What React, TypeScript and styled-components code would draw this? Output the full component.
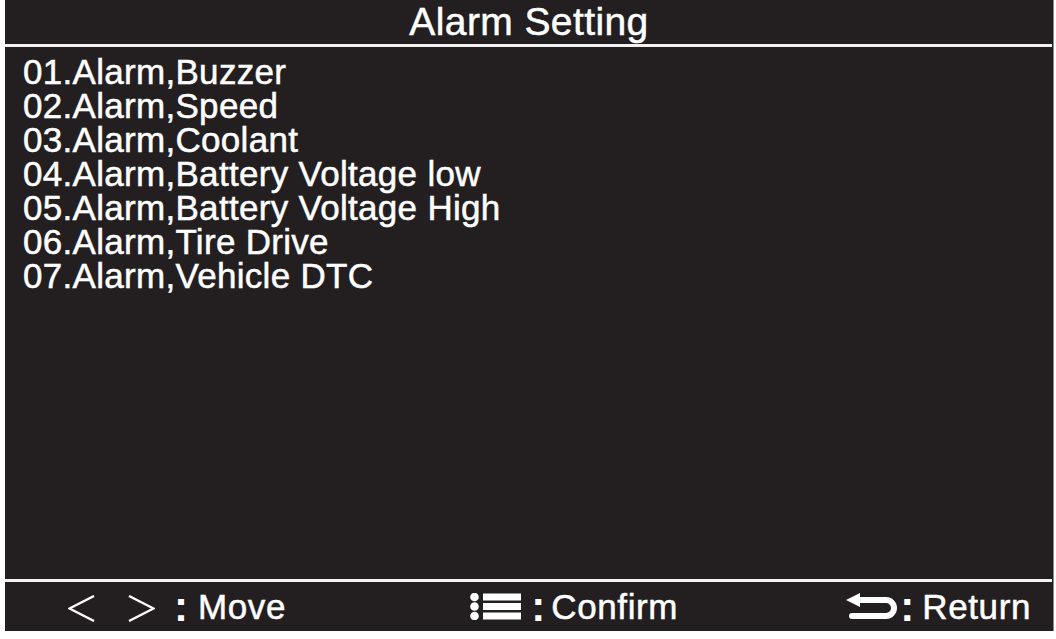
import React from 'react';
import styled, { createGlobalStyle } from 'styled-components';

const GlobalStyle = createGlobalStyle`
    html, body {
        margin: 0;
        padding: 0;
        background: #ffffff;
    }
    body {
        font-family: "Liberation Sans", Arial, sans-serif;
    }
`;

const Screen = styled.div`
    display: flex;
    flex-direction: column;
    width: 1049px;
    height: 631px;
    margin-left: 5px;
    background: #231f20;
    color: #ffffff;
    border-right: 1px solid #8c8a8a;
    box-sizing: border-box;
`;

const Header = styled.h1`
    margin: 0;
    height: 44px;
    line-height: 44px;
    text-align: center;
    font-size: 39px;
    font-weight: 400;
    letter-spacing: 0.4px;
    -webkit-text-stroke: 0.5px #ffffff;
`;

const Rule = styled.div`
    height: 3px;
    margin-right: 1px;
    background: #f4f2f2;
`;

const MenuList = styled.ol`
    flex: 1;
    margin: 0;
    padding: 8px 0 0 18px;
    list-style: none;
`;

const MenuItem = styled.li`
    font-size: 35px;
    line-height: 34px;
    letter-spacing: 0.3px;
    -webkit-text-stroke: 0.5px #ffffff;
    white-space: nowrap;
`;

const Footer = styled.div`
    display: flex;
    align-items: center;
    justify-content: space-between;
    height: 49px;
    padding: 0 22px 0 63px;
`;

const Key = styled.div<{ $shift?: number }>`
    display: flex;
    align-items: center;
    margin-left: ${(p) => p.$shift ?? 0}px;
`;

const Colon = styled.span<{ $gap: number }>`
    margin-left: ${(p) => p.$gap}px;
    font-size: 42px;
    font-weight: 700;
    line-height: 49px;
`;

const Label = styled.span<{ $gap: number }>`
    margin-left: ${(p) => p.$gap}px;
    font-size: 35px;
    line-height: 49px;
    letter-spacing: 0.6px;
    -webkit-text-stroke: 0.5px #ffffff;
`;

const Chevrons = styled.div`
    display: flex;
    align-items: center;
    gap: 33px;
    padding-top: 3px;
`;

const Chevron = ({ dir }: { dir: 'left' | 'right' }) => (
    <svg width="27" height="27" viewBox="0 0 27 27">
        <polyline
            points={dir === 'left' ? '26,1 1.5,13.5 26,26' : '1,1 25.5,13.5 1,26'}
            fill="none"
            stroke="#ffffff"
            strokeWidth="2.4"
            strokeLinejoin="miter"
        />
    </svg>
);

const ListIcon = () => (
    <svg width="51" height="27" viewBox="0 0 51 27">
        <circle cx="4.5" cy="4" r="4.3" fill="#ffffff" />
        <circle cx="4.5" cy="13.5" r="4.3" fill="#ffffff" />
        <circle cx="4.5" cy="23" r="4.3" fill="#ffffff" />
        <rect x="13" y="0.5" width="38" height="7" fill="#ffffff" />
        <rect x="13" y="10" width="38" height="7" fill="#ffffff" />
        <rect x="13" y="19.5" width="38" height="7" fill="#ffffff" />
    </svg>
);

const ReturnIcon = () => (
    <svg width="52" height="27" viewBox="0 0 52 27">
        <path
            d="M10 7 H40 A8 8 0 0 1 40 23 H6"
            fill="none"
            stroke="#ffffff"
            strokeWidth="6"
            strokeLinecap="round"
        />
        <polygon points="0,7 14,0 14,14" fill="#ffffff" />
    </svg>
);

const items = [
    '01.Alarm,Buzzer',
    '02.Alarm,Speed',
    '03.Alarm,Coolant',
    '04.Alarm,Battery Voltage low',
    '05.Alarm,Battery Voltage High',
    '06.Alarm,Tire Drive',
    '07.Alarm,Vehicle DTC',
];

const App: React.FC = () => {
    return (
        <>
            <GlobalStyle />
            <Screen>
                <Header>Alarm Setting</Header>
                <Rule />
                <MenuList>
                    {items.map((item) => (
                        <MenuItem key={item}>{item}</MenuItem>
                    ))}
                </MenuList>
                <Rule />
                <Footer>
                    <Key>
                        <Chevrons>
                            <Chevron dir="left" />
                            <Chevron dir="right" />
                        </Chevrons>
                        <Colon $gap={19}>:</Colon>
                        <Label $gap={10}>Move</Label>
                    </Key>
                    <Key $shift={16}>
                        <ListIcon />
                        <Colon $gap={10}>:</Colon>
                        <Label $gap={6}>Confirm</Label>
                    </Key>
                    <Key>
                        <ReturnIcon />
                        <Colon $gap={2}>:</Colon>
                        <Label $gap={8}>Return</Label>
                    </Key>
                </Footer>
            </Screen>
        </>
    );
};

export default App;
